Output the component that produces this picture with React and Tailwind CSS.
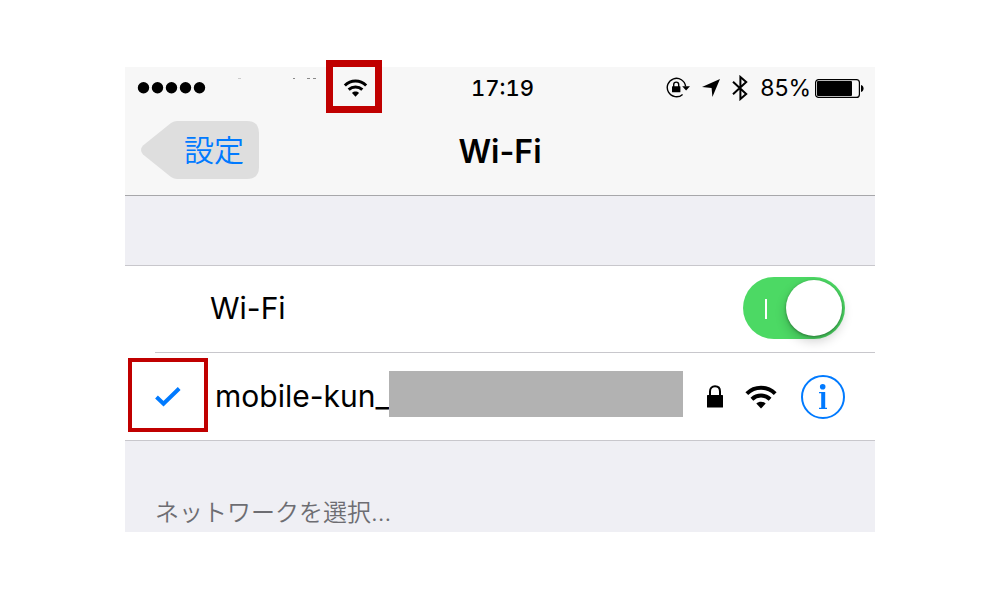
import React, { useState } from 'react';

const WifiIcon = ({ className }) => (
  <svg viewBox="0 0 32 24" className={className} fill="none" stroke="currentColor" aria-hidden="true">
    <path d="M1.8 8.6C9.8 0.8 22.2 0.8 30.2 8.6" strokeWidth="4" />
    <path d="M6.9 14.2C12.1 9.3 19.9 9.3 25.1 14.2" strokeWidth="4" />
    <path d="M11.3 18.6C13.9 16.1 18.1 16.1 20.7 18.6L16 23.6Z" fill="currentColor" stroke="none" />
  </svg>
);

const LockIcon = ({ className }) => (
  <svg viewBox="0 0 16 23" className={className} aria-hidden="true">
    <path d="M3 11V6.5C3 3.2 5 1.2 8 1.2S13 3.2 13 6.5V11" fill="none" stroke="currentColor" strokeWidth="2" />
    <rect x="0" y="10" width="16" height="12.5" rx="0.5" fill="currentColor" />
  </svg>
);

const CheckIcon = ({ className }) => (
  <svg viewBox="0 0 26 20" className={className} aria-hidden="true">
    <path d="M1.5 10L8.5 16.7L24.2 1.5" fill="none" stroke="currentColor" strokeWidth="4" />
  </svg>
);

const RotationLockIcon = () => (
  <svg viewBox="0 0 24 22" className="h-[22px] w-6" fill="none" stroke="currentColor" aria-hidden="true">
    <path d="M19.6 9.4A9.2 9.2 0 1 0 16.6 17.4" strokeWidth="1.4" />
    <path d="M16.2 9.2H24L20.1 13.4Z" fill="currentColor" stroke="none" />
    <path d="M7.7 10V7.4C7.7 4.4 12.7 4.4 12.7 7.4V10" strokeWidth="1.4" />
    <rect x="6" y="9.2" width="8.4" height="6" rx="0.5" fill="currentColor" stroke="none" />
  </svg>
);

const LocationIcon = () => (
  <svg viewBox="0 0 18 18" className="size-[18px]" aria-hidden="true">
    <path d="M18 0L10.4 18L9.6 9L0 8Z" fill="currentColor" />
  </svg>
);

const BluetoothIcon = () => (
  <svg viewBox="0 0 16 26" className="h-[26px] w-4" aria-hidden="true">
    <path
      d="M1 6.8L14.2 19L8.4 24V2L14.2 7L1 19.2"
      fill="none"
      stroke="currentColor"
      strokeWidth="2"
    />
  </svg>
);

const BatteryIcon = () => (
  <svg viewBox="0 0 49 19" className="h-[19px] w-[49px]" role="img" aria-label="85%">
    <rect x="0.6" y="0.6" width="43.8" height="17.8" rx="3" fill="none" stroke="currentColor" strokeWidth="1.2" />
    <rect x="2" y="2" width="35" height="15" rx="1" fill="currentColor" />
    <path d="M46 6C49.4 6.6 49.4 12.4 46 13Z" fill="currentColor" />
  </svg>
);

const StatusBar = () => (
  <div className="grid h-[42px] grid-cols-[1fr_auto_1fr] items-center pl-3 pr-[11px]">
    <div className="flex items-center">
      <svg viewBox="0 0 70 12" className="h-3 w-[70px]" role="img" aria-label="5/5">
        {[6.5, 20.5, 34.5, 48.5, 62.5].map((cx) => (
          <circle key={cx} cx={cx} cy="5.8" r="5.7" />
        ))}
      </svg>
      {/* what is left of the carrier name */}
      <svg viewBox="0 0 100 20" className="ml-6 h-5 w-[100px]" fill="#8a8a8a" aria-hidden="true">
        <path d="M7 0h3v1H7z" opacity="0.4" />
        <path d="M62 0h2v1h-2zM76 0h3v1h-3zM82 0h3v1h-3z" />
      </svg>
      <span className="relative ml-3 block">
        <WifiIcon className="h-[18px] w-[25px]" />
        <span className="pointer-events-none absolute -bottom-4 -left-[17px] -right-3.5 -top-[19px] border-[7px] border-[#c00000]"></span>
      </span>
    </div>
    <time className="pl-1 text-[22px] font-medium tabular-nums">17:19</time>
    <div className="flex items-center justify-end">
      <RotationLockIcon />
      <span className="ml-3"><LocationIcon /></span>
      <span className="ml-3"><BluetoothIcon /></span>
      <span className="ml-3 text-[23px]">85%</span>
      <span className="ml-1"><BatteryIcon /></span>
    </div>
  </div>
);

const BackButton = () => (
  <button type="button" className="relative flex h-[58px] w-[119px] items-center pl-11 text-[30px] font-[350] text-[#007aff]">
    <svg viewBox="0 0 119 58" className="absolute inset-0 size-full" aria-hidden="true">
      <path
        d="M37 0H107Q119 0 119 12V46Q119 58 107 58H37Q34 58 31 56L3 33.5Q-1 29 3 24.5L31 2Q34 0 37 0Z"
        fill="#dedede"
      />
    </svg>
    <span className="relative">設定</span>
  </button>
);

const App = () => {
  const [wifiOn, setWifiOn] = useState(true);

  return (
    <div className="min-h-screen bg-white px-[12.5%] pt-[67px] font-['Inter','Noto_Sans_CJK_JP',sans-serif] text-black">
      <main className="bg-[#efeff4]">
        <header className="border-b border-[#a7a7aa] bg-[#f7f7f7]">
          <StatusBar />
          <div className="grid grid-cols-[1fr_auto_1fr] items-center px-[15px] pb-4 pt-3">
            <BackButton />
            <h1 className="pt-1 text-[32px] font-semibold leading-10">Wi-Fi</h1>
          </div>
        </header>

        <ul className="mt-[69px] border-y border-[#c8c7cc] bg-white">
          <li className="pl-[30px]">
            <div className="flex h-[87px] items-center justify-between border-b border-[#c8c7cc] pb-0.5 pl-[55px] pr-[30px]">
              <label htmlFor="wifi" className="text-[30px]">Wi-Fi</label>
              <span className="relative block h-[62px] w-[102px]">
                <input
                  id="wifi"
                  type="checkbox"
                  role="switch"
                  checked={wifiOn}
                  onChange={(e) => setWifiOn(e.target.checked)}
                  className="peer block size-full cursor-pointer appearance-none rounded-full bg-gray-200 checked:bg-[#4cd964]"
                />
                <span className="pointer-events-none absolute left-[22px] top-[22px] h-5 w-0.5 bg-white"></span>
                <span className="pointer-events-none absolute left-[3px] top-[3px] size-14 rounded-full bg-white shadow-[0_5px_12px_rgba(0,0,0,0.2),0_1px_3px_rgba(0,0,0,0.35)] transition-transform peer-checked:translate-x-10"></span>
              </span>
            </div>
          </li>
          <li className="flex h-[87px] items-center px-[30px]">
            <span className="relative block text-[#007aff]">
              <CheckIcon className="h-5 w-[26px]" />
              <span className="pointer-events-none absolute -inset-x-[27px] -bottom-[25px] -top-[29px] border-4 border-[#c00000]"></span>
            </span>
            <span className="ml-[34px] text-[30px]">mobile-kun_</span>
            <span className="mb-1.5 h-[46px] flex-1 bg-[#b2b2b2]"></span>
            <LockIcon className="ml-6 h-[23px] w-4" />
            <WifiIcon className="ml-[22px] h-6 w-8" />
            <button type="button" aria-label="Info" className="ml-6 text-[#007aff]">
              <svg viewBox="0 0 44 44" className="size-11" fill="none" stroke="currentColor">
                <circle cx="22" cy="22" r="21" strokeWidth="2" />
                <circle cx="21.7" cy="11.8" r="2.8" fill="currentColor" stroke="none" />
                <path d="M22.2 17V33" strokeWidth="4" />
                <path d="M18 17.6H24M18 33.4H26" strokeWidth="1.4" />
              </svg>
            </button>
          </li>
        </ul>

        <h2 className="px-[30px] pb-0.5 pt-[55px] text-2xl font-[350] leading-[34px] text-[#6d6d72]">
          ネットワークを選択...
        </h2>
      </main>
    </div>
  );
};

export default App;
